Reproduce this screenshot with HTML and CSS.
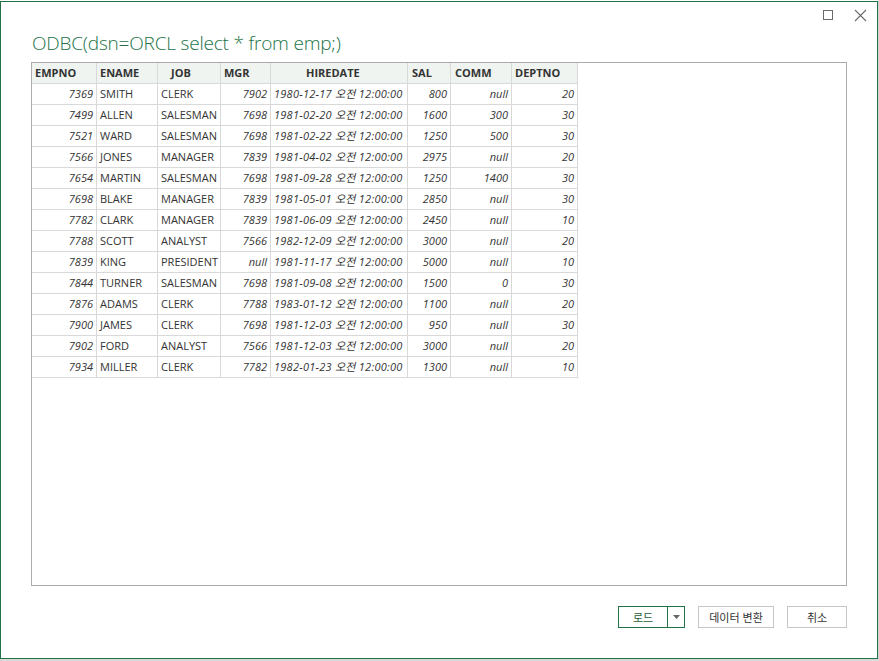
FILE: index.html
```html
<!DOCTYPE html>
<html lang="ko">
<head>
<meta charset="utf-8">
<title>ODBC</title>
<link rel="stylesheet" href="styles.css">
</head>
<body>
<div class="screen">
  <div class="dialog">
    <div class="top">
      <div class="winbtns">
        <svg class="icon" width="12" height="12" viewBox="0 0 12 12"><rect x="1.5" y="1.5" width="9" height="9" fill="none" stroke="#6b6b6b" stroke-width="1"/></svg>
        <svg class="icon close" width="13" height="13" viewBox="0 0 13 13"><path d="M1 1 L12 12 M12 1 L1 12" stroke="#6b6b6b" stroke-width="1.1" fill="none"/></svg>
      </div>
      <h1 class="title">ODBC(dsn=ORCL select * from emp;)</h1>
    </div>
    <div class="preview">
      <div class="grid">
        <div class="h">EMPNO</div><div class="h">ENAME</div><div class="h job">JOB</div><div class="h">MGR</div><div class="h hd">HIREDATE</div><div class="h p5">SAL</div><div class="h p5">COMM</div><div class="h">DEPTNO</div>

        <div class="n">7369</div><div class="t">SMITH</div><div class="t">CLERK</div><div class="n">7902</div><div class="d">1980-12-17 오전 12:00:00</div><div class="n">800</div><div class="n">null</div><div class="n">20</div>
        <div class="n">7499</div><div class="t">ALLEN</div><div class="t">SALESMAN</div><div class="n">7698</div><div class="d">1981-02-20 오전 12:00:00</div><div class="n">1600</div><div class="n">300</div><div class="n">30</div>
        <div class="n">7521</div><div class="t">WARD</div><div class="t">SALESMAN</div><div class="n">7698</div><div class="d">1981-02-22 오전 12:00:00</div><div class="n">1250</div><div class="n">500</div><div class="n">30</div>
        <div class="n">7566</div><div class="t">JONES</div><div class="t">MANAGER</div><div class="n">7839</div><div class="d">1981-04-02 오전 12:00:00</div><div class="n">2975</div><div class="n">null</div><div class="n">20</div>
        <div class="n">7654</div><div class="t">MARTIN</div><div class="t">SALESMAN</div><div class="n">7698</div><div class="d">1981-09-28 오전 12:00:00</div><div class="n">1250</div><div class="n">1400</div><div class="n">30</div>
        <div class="n">7698</div><div class="t">BLAKE</div><div class="t">MANAGER</div><div class="n">7839</div><div class="d">1981-05-01 오전 12:00:00</div><div class="n">2850</div><div class="n">null</div><div class="n">30</div>
        <div class="n">7782</div><div class="t">CLARK</div><div class="t">MANAGER</div><div class="n">7839</div><div class="d">1981-06-09 오전 12:00:00</div><div class="n">2450</div><div class="n">null</div><div class="n">10</div>
        <div class="n">7788</div><div class="t">SCOTT</div><div class="t">ANALYST</div><div class="n">7566</div><div class="d">1982-12-09 오전 12:00:00</div><div class="n">3000</div><div class="n">null</div><div class="n">20</div>
        <div class="n">7839</div><div class="t">KING</div><div class="t">PRESIDENT</div><div class="n">null</div><div class="d">1981-11-17 오전 12:00:00</div><div class="n">5000</div><div class="n">null</div><div class="n">10</div>
        <div class="n">7844</div><div class="t">TURNER</div><div class="t">SALESMAN</div><div class="n">7698</div><div class="d">1981-09-08 오전 12:00:00</div><div class="n">1500</div><div class="n">0</div><div class="n">30</div>
        <div class="n">7876</div><div class="t">ADAMS</div><div class="t">CLERK</div><div class="n">7788</div><div class="d">1983-01-12 오전 12:00:00</div><div class="n">1100</div><div class="n">null</div><div class="n">20</div>
        <div class="n">7900</div><div class="t">JAMES</div><div class="t">CLERK</div><div class="n">7698</div><div class="d">1981-12-03 오전 12:00:00</div><div class="n">950</div><div class="n">null</div><div class="n">30</div>
        <div class="n">7902</div><div class="t">FORD</div><div class="t">ANALYST</div><div class="n">7566</div><div class="d">1981-12-03 오전 12:00:00</div><div class="n">3000</div><div class="n">null</div><div class="n">20</div>
        <div class="n">7934</div><div class="t">MILLER</div><div class="t">CLERK</div><div class="n">7782</div><div class="d">1982-01-23 오전 12:00:00</div><div class="n">1300</div><div class="n">null</div><div class="n">10</div>
      </div>
    </div>
    <div class="actions">
      <div class="split">
        <button class="btn load">로드</button>
        <button class="btn arrow"><svg width="7" height="4" viewBox="0 0 7 4"><path d="M0 0 H7 L3.5 4 Z" fill="#666"/></svg></button>
      </div>
      <button class="btn plain wide">데이터 변환</button>
      <button class="btn plain cancel">취소</button>
    </div>
  </div>
  <div class="under"></div>
</div>
</body>
</html>
```
FILE: styles.css
```css
html, body {
  margin: 0;
  padding: 0;
  background: #ffffff;
}
body {
  font-family: "Open Sans", "Noto Sans CJK KR", sans-serif;
  color: #333;
}
.screen {
  width: 879px;
  height: 661px;
  padding-top: 1px;
  box-sizing: border-box;
  background: linear-gradient(to right, #ffffff 0, #ffffff 878px, #d6d6d6 878px);
}
.dialog {
  width: 878px;
  height: 658px;
  box-sizing: border-box;
  border: 1px solid #217346;
  background: #fff;
  display: flex;
  flex-direction: column;
}
.under {
  height: 2px;
  width: 878px;
  background: #d9d9d9;
}
.top {
  height: 60px;
  display: flex;
  flex-direction: column;
}
.winbtns {
  display: flex;
  justify-content: flex-end;
  gap: 20px;
  padding: 7px 10px 0 0;
  height: 14px;
}
.icon { display: block; }
.title {
  margin: 8px 0 0 31px;
  font-family: "Open Sans", sans-serif;
  font-weight: 300;
  font-size: 19px;
  line-height: 24px;
  color: #217346;
  letter-spacing: -0.2px;
}
.preview {
  margin: 0 30px;
  height: 524px;
  box-sizing: border-box;
  border: 1px solid #ababab;
  overflow: hidden;
}
.grid {
  display: grid;
  grid-template-columns: 65px 61px 63px 50px 137px 43px 61px 66px;
  grid-auto-rows: 21px;
  width: 546px;
  font-size: 11px;
}
.grid > div {
  box-sizing: border-box;
  border-right: 1px solid #d9d9d9;
  border-bottom: 1px solid #d9d9d9;
  line-height: 20px;
  white-space: nowrap;
  overflow: hidden;
  color: #333;
}
.h {
  background: #eff4f0;
  font-weight: 700;
  padding-left: 3px;
  color: #333;
}
.h.job { padding-left: 13px; }
.h.hd { padding-left: 35px; }
.h.p5 { padding-left: 4px; }
.n {
  text-align: right;
  font-style: italic;
  padding-right: 3px;
}
.t { padding-left: 3px; }
.d {
  font-style: italic;
  padding-left: 3px;
  letter-spacing: 0.25px;
  font-family: "Open Sans", "Noto Sans CJK KR", sans-serif;
}
.actions {
  margin-top: 20px;
  display: flex;
  justify-content: flex-end;
  gap: 13px;
  padding-right: 30px;
}
.btn {
  height: 22px;
  box-sizing: border-box;
  font-family: "Noto Sans CJK KR", "Open Sans", sans-serif;
  font-size: 11px;
  color: #333;
  background: #fff;
  padding: 0;
  margin: 0;
  line-height: 18px;
}
.split {
  display: flex;
  border: 1px solid #217346;
  height: 22px;
  box-sizing: border-box;
}
.split .btn {
  border: 0;
  height: 20px;
}
.load {
  width: 49px;
  border-right: 1px solid #217346 !important;
  color: #1e5c36;
}
.arrow {
  width: 16px;
  display: flex;
  align-items: center;
  justify-content: center;
}
.plain {
  border: 1px solid #c6c6c6;
}
.wide { width: 76px; }
.cancel { width: 60px; }
```
